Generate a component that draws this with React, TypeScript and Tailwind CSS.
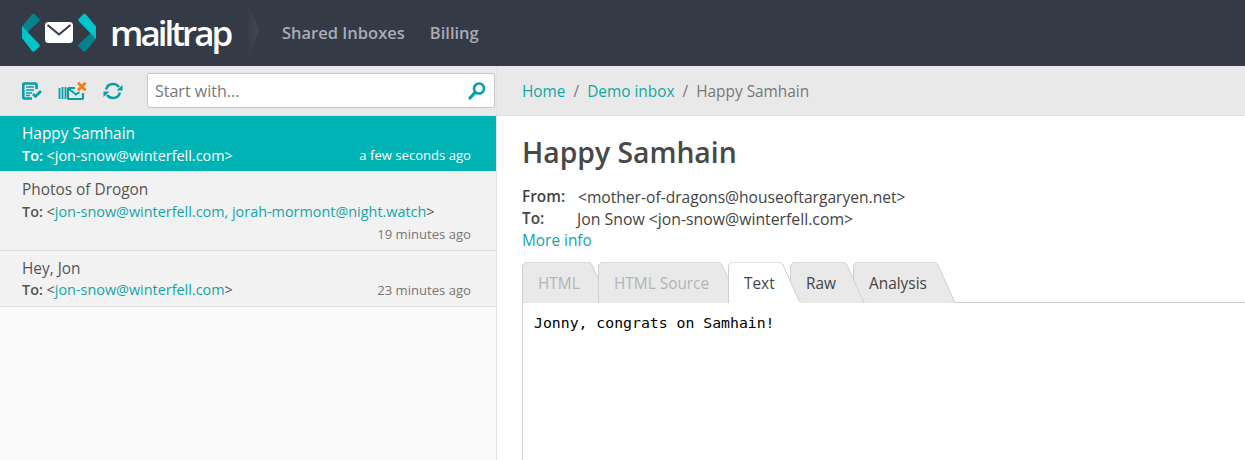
const tabs = [
  { label: "HTML", width: 88, overlap: 12, z: "z-[1]", tone: "text-[#b4b4b4]" },
  { label: "HTML Source", width: 142, overlap: 12, z: "z-[2]", tone: "text-[#b4b4b4]" },
  { label: "Text", width: 73, overlap: 11, z: "z-[5]", tone: "text-[#444]", active: true },
  { label: "Raw", width: 75, overlap: 12, z: "z-[4]", tone: "text-[#444]" },
  { label: "Analysis", width: 103, overlap: 0, z: "z-[3]", tone: "text-[#444]" },
];

function Logo() {
  return (
    <svg width="78" height="40" viewBox="0 0 78 40" className="shrink-0">
      <path d="M12 1.500c1-1 2-1 3 0l4 4c1 1 1 2 0 3L2 24V13.500Z" fill="#05828c" />
      <path d="M2 13 19 31c1 1 1 2 0 3l-4 4c-1 1-2 1-3 0L2 25Z" fill="#00c4cb" />
      <path d="M66 38c-1 1-2 1-3 0l-4-4c-1-1-1-2 0-3L76 15v10.500Z" fill="#05828c" />
      <path d="M76 26 59 8.500c-1-1-1-2 0-3l4-4c1-1 2-1 3 0L76 13.500Z" fill="#00c4cb" />
      <rect x="25" y="9" width="28" height="21" rx="3.500" fill="#fff" />
      <path d="M27.500 12 39 21.500 50.500 12" fill="none" stroke="#343a46" strokeWidth="2" />
    </svg>
  );
}

function ComposeIcon() {
  return (
    <svg width="20" height="18" viewBox="0 0 20 18" fill="none" stroke="#05a0a5" strokeWidth="2.600">
      <path d="M14.500 7V2.500a1 1 0 0 0-1-1H2.300a1 1 0 0 0-1 1v13a1 1 0 0 0 1 1H10" />
      <path d="M4 5h8M4 8h8M4 11h6M4 13.500h4" strokeWidth="1.400" />
      <path d="m11 12 2.500 2.500 5.500-5.500" strokeWidth="2.600" />
    </svg>
  );
}

function ClearIcon() {
  return (
    <svg width="29" height="18" viewBox="0 0 29 18" fill="none" stroke="#05a0a5" strokeWidth="2">
      <path d="M1.500 6v11M4.500 5v12M7.500 5v12" strokeWidth="1.800" />
      <path d="M17 6h-6a1 1 0 0 0-1 1v9a1 1 0 0 0 1 1h13a1 1 0 0 0 1-1v-5" strokeWidth="2.200" />
      <path d="m11 7 7 5.500 3.500-2.500" />
      <path d="m20 .800 7.500 7.500M27.500 .800 20 8.300" stroke="#f47a12" strokeWidth="2.800" />
    </svg>
  );
}

function RefreshIcon() {
  return (
    <svg width="20" height="18" viewBox="0 0 20 18" fill="none" stroke="#05a0a5" strokeWidth="2.600">
      <path d="M3 7.500C4 4 6.500 2 10 2c2.500 0 4.500 1 6 3" />
      <path d="M17 10.500C16 14 13.500 16 10 16c-2.500 0-4.500-1-6-3" />
      <path d="M19.500 3v5.500H13.500Z" strokeWidth="0" fill="#05a0a5" />
      <path d="M.500 15V9.500H6.500Z" strokeWidth="0" fill="#05a0a5" />
    </svg>
  );
}

function SearchIcon() {
  return (
    <svg width="18" height="18" viewBox="0 0 18 18" fill="none" stroke="#05a0a5">
      <circle cx="11" cy="6.500" r="5" strokeWidth="2.600" />
      <path d="M7 10.500 2 16" strokeWidth="3.200" strokeLinecap="round" />
    </svg>
  );
}

function HeaderEdge() {
  return (
    <svg width="15" height="66" viewBox="0 0 15 66" className="ml-[16px] shrink-0">
      <defs>
        <linearGradient id="edge" x1="0" x2="1" y1="0" y2="0">
          <stop offset="0" stopColor="#343a46" />
          <stop offset="1" stopColor="#414855" />
        </linearGradient>
      </defs>
      <path d="M0 0h1l12 30L0 66Z" fill="url(#edge)" />
    </svg>
  );
}

function Addr({ children }: { children: React.ReactNode }) {
  return <span className="text-[#12a5a8]">{children}</span>;
}

function MessageRow({
  title,
  to,
  time,
  wrapTime,
}: {
  title: string;
  to: string;
  time: string;
  wrapTime?: boolean;
}) {
  return (
    <div
      className={`border-b border-[#dedede] bg-[#f2f2f2] pl-[22px] pr-[25px] text-[#555] ${
        wrapTime ? "pt-[7px] pb-[5px]" : "pt-[6px] pb-[5px]"
      }`}
    >
      <div className={wrapTime ? "h-[23px] leading-[24px]" : "h-[22px] leading-[24px]"}>{title}</div>
      <div className={wrapTime ? "" : "flex justify-between"}>
        <div className="h-[22px] text-[14.400px] leading-[22px]">
          <b className="font-semibold">To:</b> &lt;<Addr>{to}</Addr>&gt;
        </div>
        <div className={`h-[22px] text-[13.100px] leading-[22px] text-[#777] ${wrapTime ? "text-right" : ""}`}>
          {time}
        </div>
      </div>
    </div>
  );
}

function Tab({
  label,
  width,
  overlap,
  z,
  tone,
  active,
}: {
  label: string;
  width: number;
  overlap: number;
  z: string;
  tone: string;
  active?: boolean;
}) {
  const r = width - 24;
  const outline = `M.5 41V5a5 5 0 0 1 5-5H${r}c3 0 5 1 6 3L${width - 1} 41`;
  return (
    <div className={`relative h-[41px] shrink-0 ${z}`} style={{ width, marginRight: -overlap }}>
      <svg width={width} height="41" viewBox={`0 0 ${width} 41`} className="absolute inset-0">
        <path d={outline + "Z"} fill={active ? "#fff" : "#e9e9e9"} stroke="none" />
        <path d={outline} fill="none" stroke="#cfcfcf" />
        {active && <path d={`M1 40.500H${width - 1}`} stroke="#fff" strokeWidth="2" />}
      </svg>
      <span className={`relative block pt-[11px] pl-[16px] leading-[22px] ${tone}`}>{label}</span>
    </div>
  );
}

export default function App() {
  return (
    <div className="flex h-[460px] w-[1245px] flex-col overflow-hidden bg-white font-['Open_Sans',sans-serif] text-[15.400px] text-[#444]">
      <header className="flex h-[66px] shrink-0 items-center bg-[#343a46] pl-[20px]">
        <Logo />
        <div className="ml-[12px] w-[120px] text-[35px] leading-[40px] font-semibold tracking-[-3px] text-white">
          mailtrap
        </div>
        <HeaderEdge />
        <nav className="ml-[21px] flex gap-[25px] text-[16.500px] font-semibold text-[#a9adb4]">
          <span>Shared Inboxes</span>
          <span>Billing</span>
        </nav>
      </header>

      <div className="flex min-h-0 flex-1">
        <aside className="flex w-[497px] shrink-0 flex-col border-r border-[#e2e2e2] bg-[#fafafa]">
          <div className="flex h-[50px] shrink-0 items-center border-b border-[#dedede] bg-[#e9e9e9] pl-[22px]">
            <ComposeIcon />
            <span className="ml-[16px] flex"><ClearIcon /></span>
            <span className="ml-[16px] flex"><RefreshIcon /></span>
            <div className="ml-[24px] flex h-[35px] w-[348px] items-center justify-between rounded-[2px] border border-[#c8c8c8] bg-white pl-[7px] pr-[8px] text-[16px] text-[#777]">
              <span className="pt-[1px]">Start with...</span>
              <SearchIcon />
            </div>
          </div>

          <div className="flex h-[55px] flex-col bg-[#00b3b4] pl-[22px] pr-[25px] pt-[6px] text-white">
            <div className="h-[23px] leading-[24px]">Happy Samhain</div>
            <div className="flex h-[22px] items-center justify-between leading-[22px]">
              <span className="text-[14.400px]">
                <b className="font-semibold">To:</b> &lt;jon-snow@winterfell.com&gt;
              </span>
              <span className="pb-[2px] text-[13.100px]">a few seconds ago</span>
            </div>
          </div>
          <MessageRow
            title="Photos of Drogon"
            to="jon-snow@winterfell.com, jorah-mormont@night.watch"
            time="19 minutes ago"
            wrapTime
          />
          <MessageRow title="Hey, Jon" to="jon-snow@winterfell.com" time="23 minutes ago" />
        </aside>

        <main className="flex min-w-0 flex-1 flex-col">
          <div className="flex h-[50px] shrink-0 items-center gap-[8px] border-b border-[#dedede] bg-[#e9e9e9] pl-[25px] pt-[2px] text-[#777]">
            <Addr>Home</Addr>
            <span>/</span>
            <Addr>Demo inbox</Addr>
            <span>/</span>
            <span>Happy Samhain</span>
          </div>

          <div className="pl-[25px]">
            <h1 className="mt-[14px] text-[28.300px] leading-[44px] font-semibold text-[#484848]">Happy Samhain</h1>
            <div className="mt-[12px] flex h-[22px] text-[15.600px] leading-[22px]">
              <b className="w-[56px] text-[15.400px] font-semibold">From:</b>
              <span>&lt;mother-of-dragons@houseoftargaryen.net&gt;</span>
            </div>
            <div className="flex h-[22px] text-[15.800px] leading-[22px]">
              <b className="w-[55px] text-[15.400px] font-semibold">To:</b>
              <span>Jon Snow &lt;jon-snow@winterfell.com&gt;</span>
            </div>
            <div className="h-[21px] leading-[21px] text-[#12a5a8]">More info</div>

            <div className="mt-[11px] flex h-[41px] border-b border-[#cfcfcf]">
              {tabs.map((tab) => (
                <Tab key={tab.label} {...tab} />
              ))}
            </div>
            <div className="h-[200px] border-l border-[#cfcfcf] pl-[11px] pt-[10px] font-['DejaVu_Sans_Mono',monospace] text-[14.800px] leading-[20px] text-black">
              Jonny, congrats on Samhain!
            </div>
          </div>
        </main>
      </div>
    </div>
  );
}
